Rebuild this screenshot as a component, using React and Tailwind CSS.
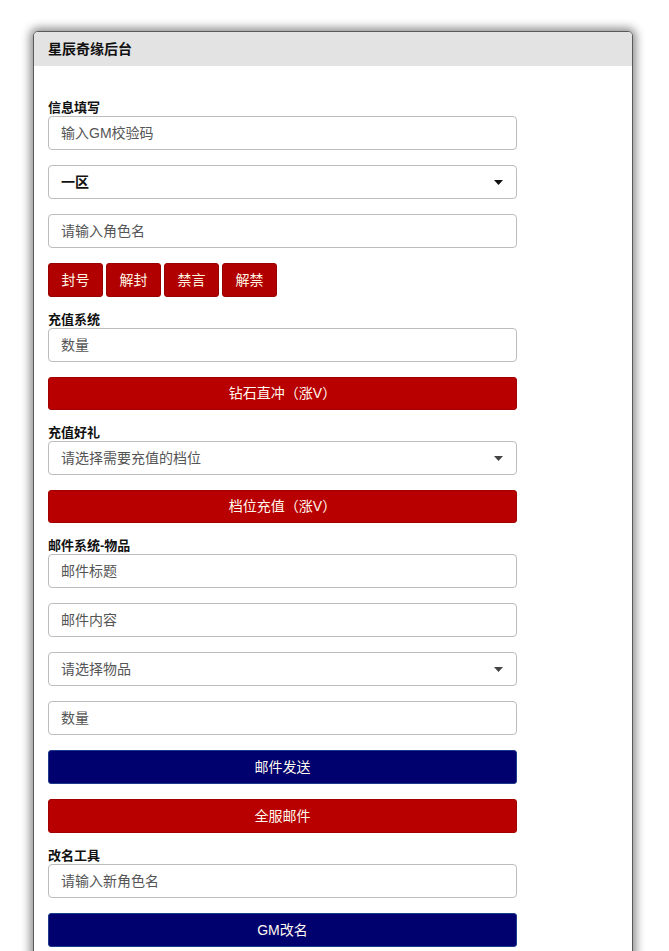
import React from 'react';

const font = { fontFamily: '"Liberation Sans", "Noto Sans CJK SC", sans-serif' };

const Label = ({ children }) => (
  <div className="h-[16px] leading-[16px] text-[13px] font-bold text-[#111]">{children}</div>
);

const Field = ({ placeholder }) => (
  <div className="h-[34px] mb-[15px] rounded-[4px] border border-[#bdbdbd] bg-white flex items-center px-[12px] text-[14px] text-[#555]">
    {placeholder}
  </div>
);

const Select = ({ value, dark }) => (
  <div className="h-[34px] mb-[15px] rounded-[4px] border border-[#bdbdbd] bg-white flex items-center justify-between pl-[12px] pr-[13px] text-[14px]">
    <span className={dark ? 'text-[#111] font-bold' : 'text-[#555]'}>{value}</span>
    <svg width="9" height="5" viewBox="0 0 9 5">
      <path d="M0 0h9L4.5 5z" fill={dark ? '#111' : '#444'} />
    </svg>
  </div>
);

// 上面两个充值按钮比下面的矮 1px
const Button = ({ children, color, tall }) => (
  <div
    className={`${tall ? 'h-[34px]' : 'h-[33px]'} mb-[15px] rounded-[3px] flex items-center justify-center text-[14px] text-[#fff8ee] ${
      color === 'blue' ? 'bg-[#00006e] border border-[#1a3a8a]' : 'bg-[#b90000] border border-[#a00000]'
    }`}
  >
    {children}
  </div>
);

const SmallButton = ({ children }) => (
  <div className="w-[55px] h-[34px] rounded-[3px] bg-[#b00000] border border-[#990000] flex items-center justify-center text-[14px] text-[#fff4e0]">
    {children}
  </div>
);

export default function App() {
  return (
    <div className="min-h-screen bg-white pt-[31px] pl-[33px] overflow-hidden" style={font}>
      <div className="w-[600px] h-[940px] border border-[#5a5a5a] rounded-t-[5px] bg-white shadow-[0_0_10px_3px_rgba(0,0,0,0.45)]">
        <div className="h-[34px] bg-[#e3e3e3] rounded-t-[4px] flex items-center px-[14px] text-[14px] font-bold text-[#111]">
          星辰奇缘后台
        </div>
        <div className="px-[14px] pt-[34px] w-[497px]">
          <Label>信息填写</Label>
          <Field placeholder="输入GM校验码" />
          <Select value="一区" dark />
          <Field placeholder="请输入角色名" />
          <div className="flex gap-[3px] mb-[15px]">
            <SmallButton>封号</SmallButton>
            <SmallButton>解封</SmallButton>
            <SmallButton>禁言</SmallButton>
            <SmallButton>解禁</SmallButton>
          </div>

          <Label>充值系统</Label>
          <Field placeholder="数量" />
          <Button>钻石直冲（涨V）</Button>

          <Label>充值好礼</Label>
          <Select value="请选择需要充值的档位" />
          <Button>档位充值（涨V）</Button>

          <Label>邮件系统-物品</Label>
          <Field placeholder="邮件标题" />
          <Field placeholder="邮件内容" />
          <Select value="请选择物品" />
          <Field placeholder="数量" />
          <Button color="blue" tall>邮件发送</Button>
          <Button tall>全服邮件</Button>

          <Label>改名工具</Label>
          <Field placeholder="请输入新角色名" />
          <Button color="blue" tall>GM改名</Button>
        </div>
      </div>
    </div>
  );
}
